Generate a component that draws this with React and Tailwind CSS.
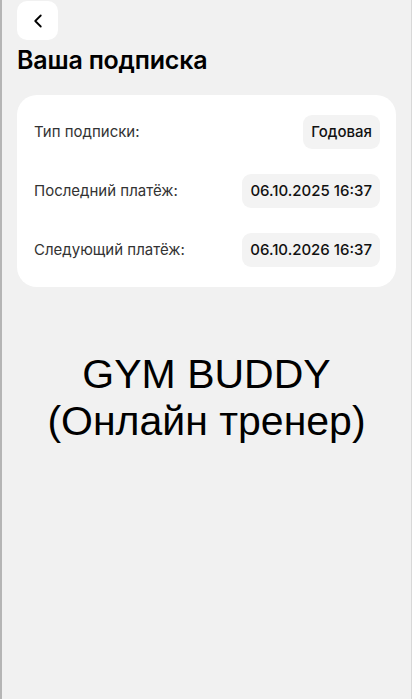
import React from 'react';
import { ChevronLeft } from 'lucide-react';

const rows = [
    { label: 'Тип подписки:', value: 'Годовая' },
    { label: 'Последний платёж:', value: '06.10.2025 16:37' },
    { label: 'Следующий платёж:', value: '06.10.2026 16:37' },
];

const App = () => {
    return (
        <div className="min-h-[699px] bg-[#f1f1f1] border-l-2 border-l-[#b5b5b5] border-r border-r-[#d8d8d8] font-['Inter',sans-serif]">
            <div className="px-[15px] pt-[1px]">
                <button className="w-[41px] h-[39px] bg-white rounded-[10px] flex items-center justify-center">
                    <ChevronLeft size={22} strokeWidth={2} className="text-black" />
                </button>
                <h1 className="mt-[5px] text-[25px] leading-[30px] font-semibold text-black tracking-[-0.2px]">Ваша подписка</h1>

                <div className="mt-[20px] bg-white rounded-[20px] px-[16px] py-[20px] flex flex-col gap-[25px]">
                    {rows.map((row) => (
                        <div key={row.label} className="flex items-center justify-between">
                            <span className="text-[15px] text-[#333] pl-px">{row.label}</span>
                            <span className="bg-[#f3f3f3] rounded-[9px] h-[34px] px-[8px] flex items-center text-[15px] font-medium text-[#111]">{row.value}</span>
                        </div>
                    ))}
                </div>
            </div>

            <div className="mt-[64px] text-center font-['Liberation_Sans',Arial,sans-serif] text-[41px] leading-[47px] text-black">
                <div>GYM BUDDY</div>
                <div>(Онлайн тренер)</div>
            </div>
        </div>
    );
};

export default App;
